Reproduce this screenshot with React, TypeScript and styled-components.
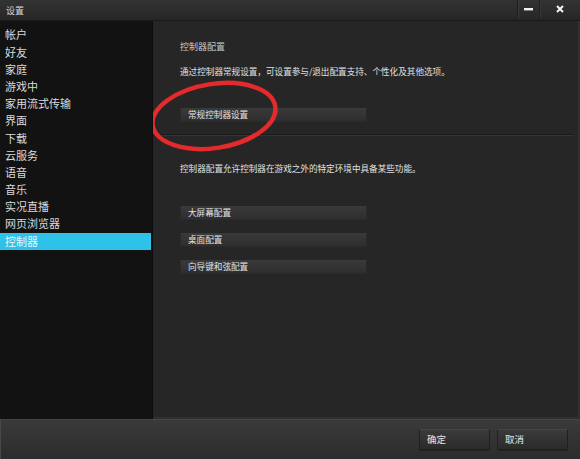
import styled, { createGlobalStyle } from "styled-components";

const GlobalStyle = createGlobalStyle`
  html, body {
    margin: 0;
    padding: 0;
    background: #1c1c1c;
  }
  * { box-sizing: border-box; }
`;

const FONT = `"Noto Sans CJK SC", "Noto Sans", sans-serif`;

const Window = styled.div`
  position: relative;
  width: 580px;
  height: 459px;
  display: flex;
  flex-direction: column;
  background: #1f1f1f;
  font-family: ${FONT};
  overflow: hidden;
`;

const TitleBar = styled.div`
  height: 21px;
  display: flex;
  align-items: center;
  background: linear-gradient(#333333, #262626);
  border-bottom: 1px solid #1a1a1a;
`;

const Title = styled.div`
  flex: 1;
  padding-left: 6px;
  font-size: 9px;
  color: #d8d8d8;
`;

const WinButton = styled.div<{ wide?: boolean }>`
  width: ${(p) => (p.wide ? 41 : 22)}px;
  height: 18px;
  margin-top: -2px;
  display: flex;
  align-items: center;
  justify-content: center;
  border-left: 1px solid #1e1e1e;
  box-shadow: inset 1px 0 0 #3a3a3a;
  color: #f0f0f0;
`;

const Body = styled.div`
  flex: 1;
  display: flex;
  min-height: 0;
`;

const Sidebar = styled.div`
  width: 153px;
  background: #121212;
  padding-top: 5.4px;
  border-right: 1px solid #0c0c0c;
`;

const NavItem = styled.div<{ active?: boolean }>`
  height: 17.2px;
  line-height: 17.2px;
  padding-left: 5px;
  margin-right: 1px;
  font-size: 11px;
  color: ${(p) => (p.active ? "#e6f8ff" : "#dadada")};
  background: ${(p) => (p.active ? "#2ec2e8" : "transparent")};
`;

const Content = styled.div`
  position: relative;
  flex: 1;
  background: #262626;
  padding: 20px 0 0 27px;
  border-bottom: 2px solid #2f2f2f;
  border-right: 2px solid #303030;
`;

const SectionTitle = styled.div`
  font-size: 9px;
  line-height: 11px;
  color: #c8c8c8;
`;

const Desc = styled.div<{ top: number }>`
  margin-top: ${(p) => p.top}px;
  font-size: 8.6px;
  line-height: 11px;
  color: #e0e0e0;
  white-space: nowrap;
`;

const SettingButton = styled.div<{ top: number }>`
  margin-top: ${(p) => p.top}px;
  width: 187px;
  height: 14px;
  line-height: 11px;
  padding-left: 7px;
  font-size: 8.6px;
  color: #e2e2e2;
  background: linear-gradient(#393939, #2e2e2e);
  border: 1px solid #2a2a2a;
  border-top-color: #3a3a3a;
  border-radius: 1px;
`;

const Divider = styled.div`
  margin: 12px 4px 0 -20px;
  height: 2px;
  border-top: 1px solid #1b1b1b;
  border-bottom: 1px solid #343434;
`;

const Annotation = styled.svg`
  position: absolute;
  left: 0;
  top: 0;
  pointer-events: none;
`;

const Footer = styled.div`
  height: 40px;
  display: flex;
  justify-content: flex-end;
  align-items: center;
  gap: 7px;
  padding-right: 12px;
  background: linear-gradient(#3a3a3a, #2c2c2c);
  border-top: 1px solid #444444;
  border-left: 1px solid #484848;
`;

const DialogButton = styled.div`
  width: 71px;
  height: 21px;
  line-height: 18px;
  padding-left: 7px;
  font-size: 9.5px;
  color: #e6e6e6;
  background: linear-gradient(#3a3a3a, #2b2b2b);
  border: 1px solid #202020;
  border-top-color: #464646;
  border-radius: 2px;
  box-shadow: 0 1px 0 #232323;
`;

const navItems = [
  "帐户",
  "好友",
  "家庭",
  "游戏中",
  "家用流式传输",
  "界面",
  "下载",
  "云服务",
  "语音",
  "音乐",
  "实况直播",
  "网页浏览器",
  "控制器",
];

export default function App() {
  return (
    <>
      <GlobalStyle />
      <Window>
        <TitleBar>
          <Title>设置</Title>
          <WinButton>
            <svg width="9" height="3" viewBox="0 0 9 3">
              <rect x="0" y="0" width="9" height="2.4" fill="#f2f2f2" />
            </svg>
          </WinButton>
          <WinButton wide>
            <svg width="8" height="8" viewBox="0 0 8 8">
              <path d="M1 1L7 7M7 1L1 7" stroke="#f2f2f2" strokeWidth="2" />
            </svg>
          </WinButton>
        </TitleBar>
        <Body>
          <Sidebar>
            {navItems.map((item) => (
              <NavItem key={item} active={item === "控制器"}>
                {item}
              </NavItem>
            ))}
          </Sidebar>
          <Content>
            <SectionTitle>控制器配置</SectionTitle>
            <Desc top={14}>通过控制器常规设置，可设置参与/退出配置支持、个性化及其他选项。</Desc>
            <SettingButton top={31}>常规控制器设置</SettingButton>
            <Divider />
            <Desc top={27}>控制器配置允许控制器在游戏之外的特定环境中具备某些功能。</Desc>
            <SettingButton top={32}>大屏幕配置</SettingButton>
            <SettingButton top={13}>桌面配置</SettingButton>
            <SettingButton top={13}>向导键和弦配置</SettingButton>
            <Annotation width="200" height="160">
              <ellipse
                cx="61"
                cy="95"
                rx="62"
                ry="32"
                transform="rotate(-9 61 95)"
                fill="none"
                stroke="#e42a2c"
                strokeWidth="4.5"
              />
            </Annotation>
          </Content>
        </Body>
        <Footer>
          <DialogButton>确定</DialogButton>
          <DialogButton>取消</DialogButton>
        </Footer>
      </Window>
    </>
  );
}
